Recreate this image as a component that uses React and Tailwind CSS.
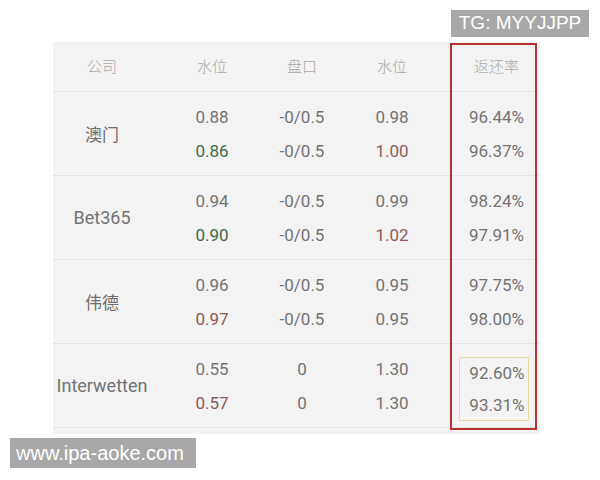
const rows = [
  {
    name: "澳门",
    cjk: true,
    lines: [
      { w1: "0.88", w1c: "", hc: "-0/0.5", w2: "0.98", w2c: "", r: "96.44%" },
      { w1: "0.86", w1c: "green", hc: "-0/0.5", w2: "1.00", w2c: "red", r: "96.37%" },
    ],
  },
  {
    name: "Bet365",
    lines: [
      { w1: "0.94", w1c: "", hc: "-0/0.5", w2: "0.99", w2c: "", r: "98.24%" },
      { w1: "0.90", w1c: "green", hc: "-0/0.5", w2: "1.02", w2c: "red", r: "97.91%" },
    ],
  },
  {
    name: "伟德",
    cjk: true,
    lines: [
      { w1: "0.96", w1c: "", hc: "-0/0.5", w2: "0.95", w2c: "", r: "97.75%" },
      { w1: "0.97", w1c: "red", hc: "-0/0.5", w2: "0.95", w2c: "", r: "98.00%" },
    ],
  },
  {
    name: "Interwetten",
    boxed: true,
    lines: [
      { w1: "0.55", w1c: "", hc: "0", w2: "1.30", w2c: "", r: "92.60%" },
      { w1: "0.57", w1c: "red", hc: "0", w2: "1.30", w2c: "", r: "93.31%" },
    ],
  },
];

function tone(c) {
  if (c === "green") return "text-[#3e6a4b]";
  if (c === "red") return "text-[#8c5a5a]";
  return "text-[#737373]";
}

function Cell({ children }) {
  return <div className="flex flex-col items-center justify-center">{children}</div>;
}

export default function App() {
  const cols = "grid grid-cols-[98px_122px_58px_122px_87px]";
  return (
    <div className="relative h-[480px] w-[600px] bg-white font-['Roboto','Noto_Sans_CJK_SC',sans-serif]">
      <div className="flex justify-end pr-[11px] pt-[10px]">
        <div className="flex h-[27px] w-[138px] items-center justify-center bg-[#a8a8a8] font-['Liberation_Sans',sans-serif] text-[19px] text-white">
          TG: MYYJJPP
        </div>
      </div>

      <div className="relative ml-[53px] mt-[5px] w-[487px] bg-[#f3f3f3] pb-[6px]">
        <div className={`${cols} h-[50px] items-center border-b border-[#e3e3e3] font-['Noto_Sans_CJK_SC',sans-serif] text-[15px] font-light text-[#aaaaaa]`}>
          <div className="text-center">公司</div>
          <div className="text-center">水位</div>
          <div className="text-center">盘口</div>
          <div className="text-center">水位</div>
          <div className="text-center">返还率</div>
        </div>

        {rows.map((row) => (
          <div
            key={row.name}
            className={`${cols} h-[84px] border-b border-[#e3e3e3] text-[17px] text-[#737373]`}
          >
            <div
              className={`flex items-center justify-center ${
                row.cjk ? "font-['Noto_Sans_CJK_SC',sans-serif] text-[17px] text-[#6e6e6e]" : "text-[18px]"
              }`}
            >
              {row.name}
            </div>
            <Cell>
              {row.lines.map((l, j) => (
                <div key={j} className={`leading-[34px] ${tone(l.w1c)}`}>{l.w1}</div>
              ))}
            </Cell>
            <Cell>
              {row.lines.map((l, j) => (
                <div key={j} className="leading-[34px]">{l.hc}</div>
              ))}
            </Cell>
            <Cell>
              {row.lines.map((l, j) => (
                <div key={j} className={`leading-[34px] ${tone(l.w2c)}`}>{l.w2}</div>
              ))}
            </Cell>
            <Cell>
              <div
                className={
                  row.boxed
                    ? "ml-[-6px] mt-[6px] flex h-[64px] w-[70px] flex-col items-end justify-center border border-[#e6dba6] pr-[3px]"
                    : "flex flex-col items-center"
                }
              >
                {row.lines.map((l, j) => (
                  <div key={j} className={row.boxed ? "leading-[32px]" : "leading-[34px]"}>{l.r}</div>
                ))}
              </div>
            </Cell>
          </div>
        ))}

        <div className="pointer-events-none absolute left-[397px] top-[1px] h-[387px] w-[87px] border-2 border-[#b5322e]" />
      </div>

      <div className="ml-[10px] mt-[4px] flex h-[30px] w-[186px] items-center bg-[#a8a8a8] pl-[6px] font-['Liberation_Sans',sans-serif] text-[20px] text-white">
        www.ipa-aoke.com
      </div>
    </div>
  );
}
